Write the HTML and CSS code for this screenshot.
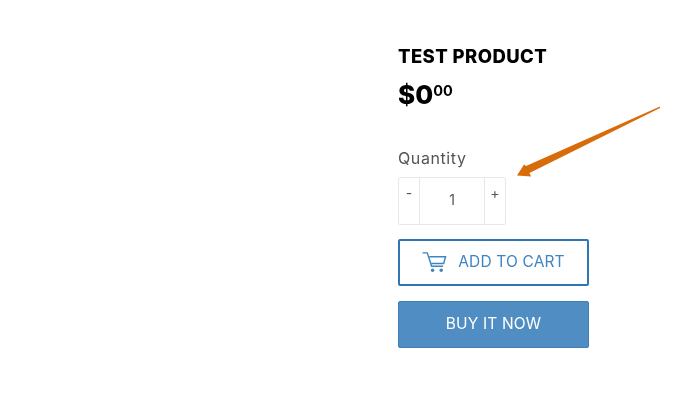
FILE: index.html
```html
<!DOCTYPE html>
<html lang="en">
<head>
<meta charset="utf-8">
<title>Test Product</title>
<link rel="stylesheet" href="styles.css">
</head>
<body>
<main class="product">
  <h1 class="title">TEST PRODUCT</h1>
  <p class="price">$0<sup class="cents">00</sup></p>
  <div class="qty-label">Quantity</div>
  <div class="qty">
    <span class="qty-btn">-</span>
    <span class="qty-value">1</span>
    <span class="qty-btn">+</span>
  </div>
  <button class="btn btn-cart" type="button">
    <svg class="cart" width="25" height="22" viewBox="0 0 26 22" fill="none" stroke="#3f85c2">
      <path d="M0.5 1.5H5.500L10 15.500H22" stroke-width="1.5"/>
      <path d="M7.500 5.500H24.500L22.500 12.500H9.600" stroke-width="1.5"/>
      <circle cx="11" cy="19.500" r="1.800" fill="#3f85c2" stroke="none"/>
      <circle cx="20" cy="19.500" r="1.800" fill="#3f85c2" stroke="none"/>
    </svg>
    <span>ADD TO CART</span>
  </button>
  <button class="btn btn-buy" type="button">BUY IT NOW</button>
</main>
<svg class="arrow" width="690" height="402" viewBox="0 0 690 402">
  <path d="M660 106.500L526 166L524 164.500L517 175.500L531 176.500L529.500 173L660 108Z" fill="#d96c0a"/>
</svg>
</body>
</html>
```
FILE: styles.css
```css
* { box-sizing: border-box; }
html, body { margin: 0; height: 100%; background: #fff; }
body { font-family: Inter, "Open Sans", sans-serif; overflow: hidden; }
.product { width: 191px; margin-left: 398px; padding-top: 45px; display: flex; flex-direction: column; will-change: opacity; }
.title { margin: 0; font-size: 18.500px; line-height: 22px; font-weight: 800; color: #000; letter-spacing: 0.4px; }
.price { margin: 12px 0 0; font-size: 26px; line-height: 32px; font-weight: 800; color: #000; }
.cents { font-size: 14.500px; line-height: 0; vertical-align: 8px; font-weight: 700; }
.qty-label { margin-top: 37px; font-size: 16px; line-height: 20px; color: #555; letter-spacing: 0.6px; }
.qty { margin-top: 9px; width: 108px; height: 48px; display: flex; border: 1px solid #e8e8e8; border-radius: 2px; color: #555; font-size: 14px; }
.qty-btn { width: 20px; flex: none; text-align: center; padding-top: 6px; line-height: 18px; }
.qty-value { flex: 1; text-align: center; line-height: 44px; border-left: 1px solid #e8e8e8; border-right: 1px solid #e8e8e8; }
.btn { width: 191px; height: 47px; border-radius: 2px; font-family: inherit; font-size: 15.500px; font-weight: 400; padding: 0 0 2px; display: flex; align-items: center; justify-content: center; letter-spacing: 0.15px; }
.btn-cart { margin-top: 14px; background: #fff; color: #3f85c2; border: 2px solid #2f76b5; gap: 11px; }
.btn-buy { margin-top: 15px; background: #508dc3; color: #fff; border: 1px solid #3f7fb8; }
.arrow { position: absolute; left: 0; top: 0; pointer-events: none; }
```
